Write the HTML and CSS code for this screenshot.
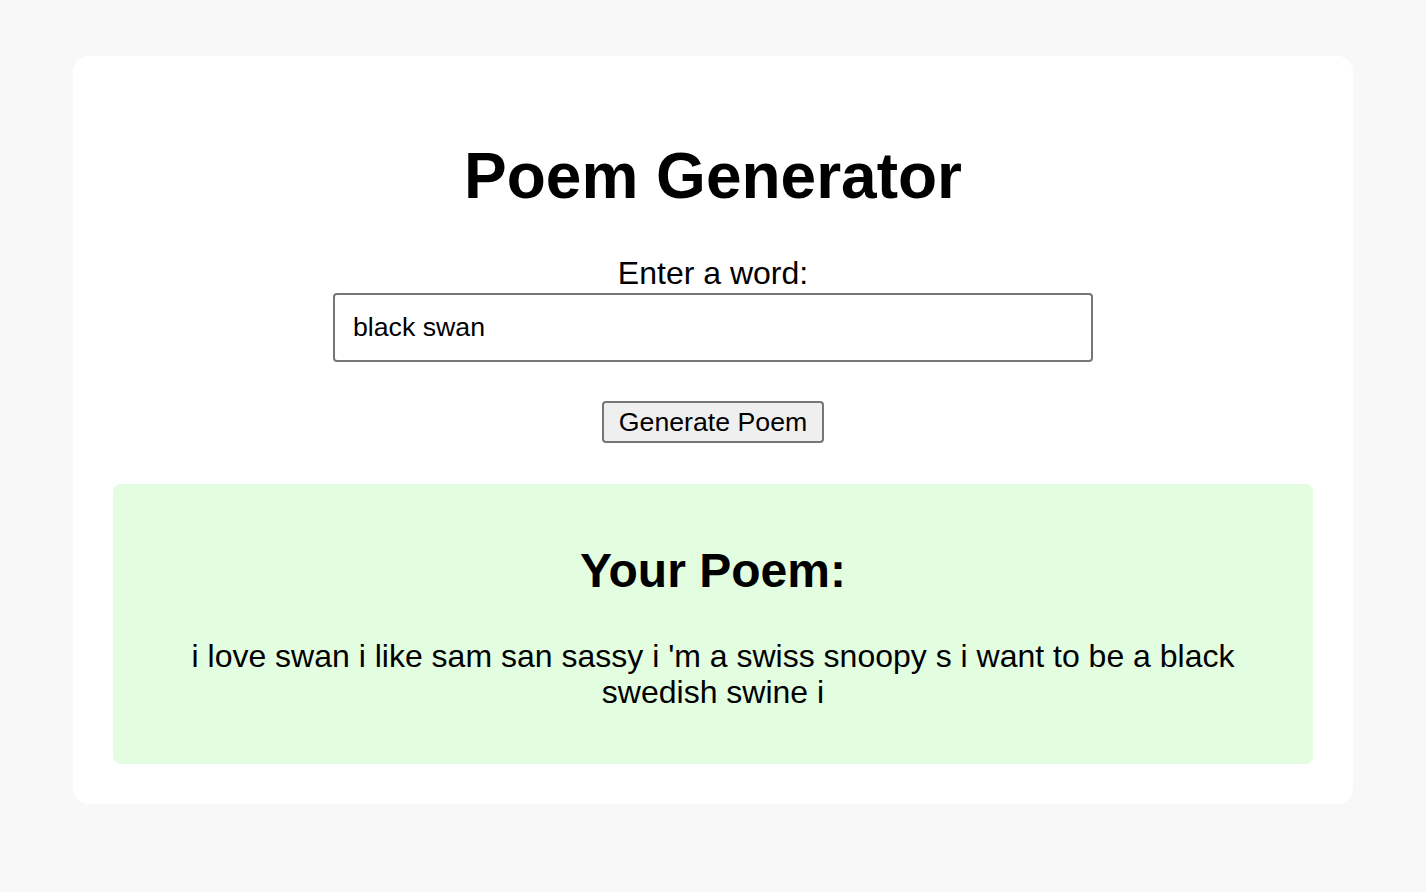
FILE: index.html
```html
<!DOCTYPE html>
<html lang="en">
<head>
<meta charset="utf-8">
<title>Poem Generator</title>
<link rel="stylesheet" href="styles.css">
</head>
<body>
<main class="card">
  <h1 class="title">Poem Generator</h1>
  <form class="form">
    <label class="label" for="word">Enter a word:</label>
    <input class="input" id="word" type="text" value="black swan">
    <button class="button" type="button">Generate Poem</button>
  </form>
  <section class="result">
    <h2 class="result-title">Your Poem:</h2>
    <p class="poem">i love swan i like sam san sassy i 'm a swiss snoopy s i want to be a black swedish swine i</p>
  </section>
</main>
</body>
</html>
```
FILE: styles.css
```css
html, body {
  margin: 0;
  padding: 0;
}
body {
  background: #f8f8f8;
  font-family: "Liberation Sans", Arial, Helvetica, sans-serif;
  color: #000;
  padding-top: 56px;
  padding-bottom: 56px;
}
.card {
  box-sizing: border-box;
  width: 1280px;
  margin: 0 auto;
  padding: 40px;
  background: #ffffff;
  border-radius: 16px;
  text-align: center;
}
.title {
  font-size: 64px;
  font-weight: bold;
  margin: 43px 0 42px;
  line-height: normal;
}
.form {
  display: flex;
  flex-direction: column;
  align-items: center;
}
.label {
  font-size: 32px;
  line-height: normal;
}
.input {
  box-sizing: border-box;
  width: 760px;
  height: 69px;
  margin-top: 1px;
  padding: 0 18px;
  font-family: "Liberation Sans", Arial, Helvetica, sans-serif;
  font-size: 26.7px;
  color: #000;
  border: 2px solid #767676;
  border-radius: 4px;
  background: #fff;
  outline: none;
}
.button {
  margin-top: 39px;
  height: 42px;
  padding: 0 15px;
  font-family: "Liberation Sans", Arial, Helvetica, sans-serif;
  font-size: 26.7px;
  line-height: 30px;
  color: #000;
  background: #efefef;
  border: 2px solid #767676;
  border-radius: 4px;
}
.result {
  margin-top: 41px;
  padding: 20px;
  background: #e3fde1;
  border-radius: 8px;
}
.result-title {
  font-size: 48px;
  font-weight: bold;
  margin: 39px 0;
  line-height: normal;
}
.poem {
  font-size: 32px;
  line-height: 36px;
  margin: 40px 0 34px;
}
```
